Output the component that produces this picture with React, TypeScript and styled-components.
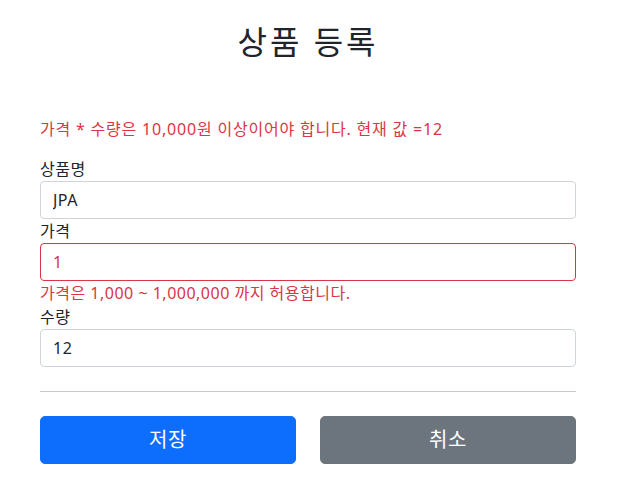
import styled, { createGlobalStyle } from 'styled-components'

const GlobalStyle = createGlobalStyle`
  * {
    box-sizing: border-box;
  }

  body {
    margin: 0;
    background: #fff;
    color: #212529;
    font-family: 'Noto Sans', 'Noto Sans CJK KR', sans-serif;
    font-size: 16px;
    line-height: 1.5;
    letter-spacing: 0.5px;
  }
`

const Container = styled.div`
  width: 560px;
  margin-left: 28px;
  padding: 0 12px;
`

const Header = styled.div`
  padding: 23px 0 48px;
  text-align: center;
`

const Title = styled.h2`
  margin: 0 0 8px;
  font-size: 32px;
  font-weight: 400;
  line-height: 1.2;
  letter-spacing: 3px;
`

const GlobalError = styled.p`
  margin: 0 0 16px;
  color: #dc3545;
  letter-spacing: 0.8px;
`

const Field = styled.div``

const Label = styled.label`
  display: inline-block;
`

const Input = styled.input<{ $invalid?: boolean }>`
  display: block;
  width: 100%;
  height: 38px;
  padding: 6px 12px;
  font: inherit;
  line-height: 1.5;
  letter-spacing: inherit;
  color: ${({ $invalid }) => ($invalid ? '#dc3545' : '#212529')};
  background: #fff;
  border: 1px solid ${({ $invalid }) => ($invalid ? '#dc3545' : '#ced4da')};
  border-radius: 4px;
  outline: none;
`

const FieldError = styled.div`
  color: #dc3545;
`

const Divider = styled.hr`
  margin: 24px 0;
  border: 0;
  border-top: 1px solid #c8c9ca;
`

const ButtonRow = styled.div`
  display: grid;
  grid-template-columns: 1fr 1fr;
  gap: 24px;
`

const Button = styled.button<{ $variant: 'primary' | 'secondary' }>`
  width: 100%;
  height: 48px;
  padding: 8px 16px;
  font: inherit;
  font-size: 20px;
  line-height: 1.5;
  letter-spacing: inherit;
  color: #fff;
  background: ${({ $variant }) => ($variant === 'primary' ? '#0d6efd' : '#6c757d')};
  border: 1px solid ${({ $variant }) => ($variant === 'primary' ? '#0d6efd' : '#6c757d')};
  border-radius: 5px;
  cursor: pointer;
`

export default function App() {
  return (
    <>
      <GlobalStyle />
      <Container>
        <Header>
          <Title>상품 등록</Title>
        </Header>
        <form onSubmit={(e) => e.preventDefault()}>
          <GlobalError>가격 * 수량은 10,000원 이상이어야 합니다. 현재 값 =12</GlobalError>
          <Field>
            <Label htmlFor="itemName">상품명</Label>
            <Input id="itemName" defaultValue="JPA" />
          </Field>
          <Field>
            <Label htmlFor="price">가격</Label>
            <Input id="price" defaultValue="1" $invalid />
            <FieldError>가격은 1,000 ~ 1,000,000 까지 허용합니다.</FieldError>
          </Field>
          <Field>
            <Label htmlFor="quantity">수량</Label>
            <Input id="quantity" defaultValue="12" />
          </Field>
          <Divider />
          <ButtonRow>
            <Button $variant="primary" type="submit">저장</Button>
            <Button $variant="secondary" type="button">취소</Button>
          </ButtonRow>
        </form>
      </Container>
    </>
  )
}
